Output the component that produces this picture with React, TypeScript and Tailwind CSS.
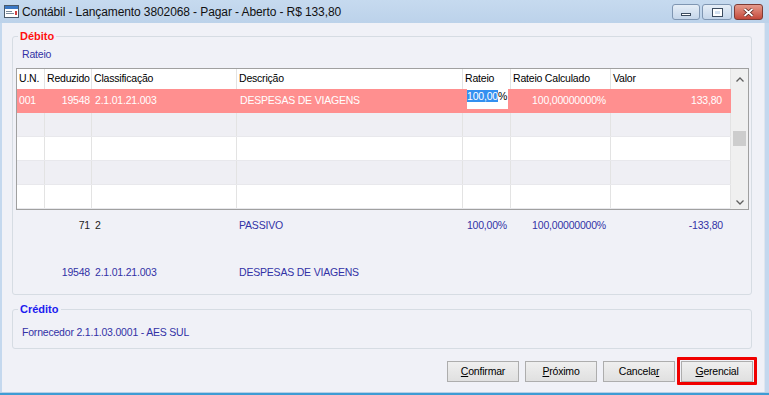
import React from "react";

const COLS = [
  { w: "w-[28px]", label: "U.N." },
  { w: "w-[47px]", label: "Reduzido" },
  { w: "w-[145px]", label: "Classificação" },
  { w: "w-[226px]", label: "Descrição" },
  { w: "w-[48px]", label: "Rateio" },
  { w: "w-[100px]", label: "Rateio Calculado" },
  { w: "w-[120px]", label: "Valor" },
];

function WindowIcon() {
  return (
    <svg width="15" height="13" viewBox="0 0 15 13">
      <rect x="0.5" y="0.5" width="14" height="12" fill="#fff" stroke="#4a5a6a" />
      <rect x="1" y="1" width="13" height="3" fill="#3b78c4" />
      <rect x="2" y="6" width="6" height="1" fill="#7a8a9a" />
      <rect x="2" y="8" width="8" height="1" fill="#7a8a9a" />
      <rect x="11" y="6" width="2" height="4" fill="#d04040" />
    </svg>
  );
}

function Chevron({ up }: { up?: boolean }) {
  return (
    <svg width="8" height="5" viewBox="0 0 8 5">
      <polyline
        points={up ? "0.5,4.5 4,1 7.5,4.5" : "0.5,0.5 4,4 7.5,0.5"}
        fill="none"
        stroke="#606060"
        strokeWidth="1.3"
      />
    </svg>
  );
}

function TitleBar() {
  return (
    <div className="h-[23px] shrink-0 flex items-start bg-linear-to-b from-[#c6daef] to-[#bcd2ea]">
      <div className="flex items-center h-[23px] pl-[4px] gap-[3px]">
        <WindowIcon />
        <span className="text-[12px] text-[#111] leading-none tracking-[-0.1px]">
          Contábil - Lançamento 3802068 - Pagar - Aberto - R$ 133,80
        </span>
      </div>
      <div className="ml-auto mr-[6px] mt-[4px] flex gap-[2px]">
        <div className="w-[28px] h-[16px] rounded-[3px] border border-[#7f96b2] bg-linear-to-b from-[#e6eef7] to-[#c5d6ea] flex items-end justify-center pb-[3px]">
          <div className="w-[10px] h-[3px] bg-white border border-[#3c4c60]" />
        </div>
        <div className="w-[30px] h-[16px] rounded-[3px] border border-[#7f96b2] bg-linear-to-b from-[#e6eef7] to-[#c5d6ea] flex items-center justify-center">
          <div className="w-[9px] h-[7px] border-[2px] border-white outline outline-1 outline-[#3c4c60]" />
        </div>
        <div className="w-[29px] h-[16px] rounded-[3px] border border-[#7e3b34] bg-linear-to-b from-[#e59a8c] to-[#c4483a] flex items-center justify-center">
          <svg width="11" height="9" viewBox="0 0 11 9">
            <path d="M1.5 1 L9.5 8 M9.5 1 L1.5 8" stroke="#4a1a14" strokeWidth="3.2" />
            <path d="M1.5 1 L9.5 8 M9.5 1 L1.5 8" stroke="#fff" strokeWidth="1.8" />
          </svg>
        </div>
      </div>
    </div>
  );
}

function Grid() {
  const emptyRows = [true, false, true, false];
  return (
    <div className="ml-[3px] w-[733px] h-[142px] border border-[#a0a0a0] bg-white flex">
      <div className="w-[714px] flex flex-col">
        <div className="h-[20px] flex bg-white">
          {COLS.map((c) => (
            <div
              key={c.label}
              className={`${c.w} h-full border-r border-[#e3e3e3] pl-[2px] flex items-center text-black whitespace-nowrap overflow-hidden`}
            >
              {c.label}
            </div>
          ))}
        </div>
        <div className="h-[24px] flex bg-[#ff8f8f] text-white">
          <div className="w-[28px] pl-[2px] flex items-center">001</div>
          <div className="w-[47px] pr-[2px] flex items-center justify-end">19548</div>
          <div className="w-[145px] pl-[3px] flex items-center">2.1.01.21.003</div>
          <div className="w-[226px] pl-[3px] flex items-center">DESPESAS DE VIAGENS</div>
          <div className="w-[48px] pl-[4px]">
            <div className="w-[41px] h-[20px] bg-white flex items-start text-black leading-[12px] pt-[1px]">
              <span className="bg-[#3390f0] text-white">100,00</span>
              <span>%</span>
            </div>
          </div>
          <div className="w-[100px] pr-[5px] flex items-center justify-end">100,00000000%</div>
          <div className="w-[120px] pr-[9px] flex items-center justify-end">133,80</div>
        </div>
        {emptyRows.map((gray, i) => (
          <div
            key={i}
            className={`h-[24px] flex border-b border-[#e8e8ec] ${gray ? "bg-[#efeff4]" : "bg-white"}`}
          >
            {COLS.map((c) => (
              <div key={c.label} className={`${c.w} h-full border-r border-[#e3e3e3]`} />
            ))}
          </div>
        ))}
      </div>
      <div className="w-[17px] bg-[#f0f0f0] flex flex-col">
        <div className="h-[20px] flex items-center justify-center">
          <Chevron up />
        </div>
        <div className="mt-[42px] ml-[2px] w-[13px] h-[15px] bg-[#cdcdcd]" />
        <div className="flex-1" />
        <div className="h-[14px] flex items-center justify-center">
          <Chevron />
        </div>
      </div>
    </div>
  );
}

function Summary() {
  return (
    <div className="ml-[4px] text-[#3232a6]">
      <div className="mt-[9px] h-[14px] flex items-center">
        <div className="w-[28px]" />
        <div className="w-[47px] pr-[2px] text-right text-[#222]">71</div>
        <div className="w-[145px] pl-[3px] text-[#222]">2</div>
        <div className="w-[226px] pl-[2px]">PASSIVO</div>
        <div className="w-[48px] pr-[4px] text-right">100,00%</div>
        <div className="w-[100px] pr-[5px] text-right">100,00000000%</div>
        <div className="w-[120px] pr-[8px] text-right">-133,80</div>
      </div>
      <div className="mt-[33px] h-[14px] flex items-center">
        <div className="w-[28px]" />
        <div className="w-[47px] pr-[2px] text-right">19548</div>
        <div className="w-[145px] pl-[3px]">2.1.01.21.003</div>
        <div className="w-[226px] pl-[2px]">DESPESAS DE VIAGENS</div>
      </div>
    </div>
  );
}

function Button({ children, highlight }: { children: React.ReactNode; highlight?: boolean }) {
  return (
    <div className="relative">
      <button className="w-[72px] h-[21px] border border-[#adadad] bg-linear-to-b from-[#efefef] to-[#e0e0e0] text-black flex items-center justify-center">
        {children}
      </button>
      {highlight && (
        <div className="absolute -left-[4px] -right-[4px] -top-[4px] -bottom-[3px] border-[3px] border-[#f00000] rounded-[1px]" />
      )}
    </div>
  );
}

export default function App() {
  return (
    <div className="w-[769px] h-[395px] flex flex-col overflow-hidden bg-[#c4d8ee] font-['Liberation_Sans',Arial,sans-serif]">
      <TitleBar />
      <div className="flex-1 ml-[2px] mr-[4px] bg-[#f0f1f7] border-r border-[#dfe6ef] flex flex-col text-[10.5px] tracking-[-0.2px]">
        <fieldset className="mt-[6px] ml-[10px] w-[740px] border border-[#d6dce3] rounded-[3px] pb-[14px]">
          <legend className="ml-[5px] px-[2px] text-[11px] tracking-normal leading-[14px] font-bold text-[#ff1010]">
            Débito
          </legend>
          <div className="pt-[4px] pl-[9px] h-[18px] leading-[14px] text-[#3232a6]">Rateio</div>
          <div className="mt-[7px]">
            <Grid />
          </div>
          <Summary />
        </fieldset>
        <fieldset className="mt-[7px] ml-[10px] w-[740px] border border-[#d6dce3] rounded-[3px] pt-[9px] pb-[9px]">
          <legend className="ml-[5px] px-[2px] text-[11px] tracking-normal leading-[14px] font-bold text-[#1c1cf0]">
            Crédito
          </legend>
          <div className="pl-[9px] h-[14px] leading-[14px] text-[#3232a6]">
            Fornecedor 2.1.1.03.0001 - AES SUL
          </div>
        </fieldset>
        <div className="mt-[12px] pr-[11px] flex justify-end gap-[6px]">
          <Button>
            <u>C</u>onfirmar
          </Button>
          <Button>
            <u>P</u>róximo
          </Button>
          <Button>
            Cancela<u>r</u>
          </Button>
          <Button highlight>
            <u>G</u>erencial
          </Button>
        </div>
      </div>
      <div className="h-[1px] bg-[#b7cfe6]" />
      <div className="h-[2px] bg-[#3e9cd4]" />
    </div>
  );
}
